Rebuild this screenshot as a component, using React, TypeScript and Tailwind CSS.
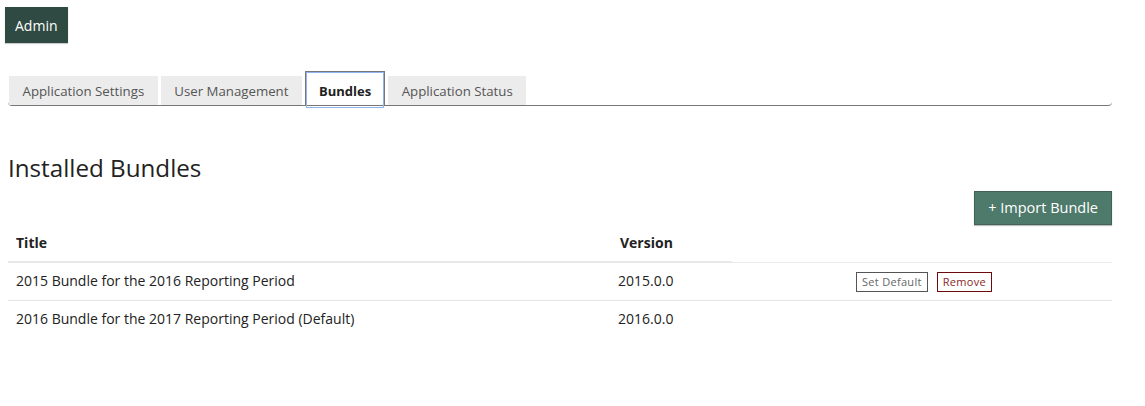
import React from "react";

const tabs = ["Application Settings", "User Management", "Bundles", "Application Status"];

export default function App() {
  return (
    <div className="w-[1145px] h-[406px] bg-white text-[#222] font-['Open_Sans',sans-serif]">
      <div className="pt-[7px] pl-[5px]">
        <button className="h-[36px] px-[10px] bg-[#2f4a42] text-white text-[14px] shadow-[0_1px_1px_rgba(0,0,0,0.2)]">
          Admin
        </button>
      </div>

      <div className="ml-[8px] w-[1104px] mt-[29px] flex items-end gap-[3px] pl-[1px] border-b border-[#777] rounded-b-[4px] h-[34px]">
        {tabs.map((t) =>
          t === "Bundles" ? (
            <div
              key={t}
              className="h-[34px] border border-b-0 border-[#777] bg-white flex"
            >
              <div className="flex-1 flex items-center px-[12px] pt-[3px] border border-[#8fb4f0] text-[13px] font-bold text-[#222] mb-[-3px]">
                {t}
              </div>
            </div>
          ) : (
            <div
              key={t}
              className="h-[29px] bg-[#ececec] flex items-center px-[13.5px] pt-[3px] text-[13.25px] text-[#555]"
            >
              {t}
            </div>
          )
        )}
      </div>

      <h1 className="ml-[8px] mt-[47px] text-[24.2px] leading-[29px] text-[#222]">Installed Bundles</h1>

      <div className="w-[1112px] flex justify-end mt-[9px]">
        <button className="h-[34px] px-[13px] bg-[#4e7a6b] text-white text-[14.5px] border border-[#3f6356] shadow-[0_1px_1px_rgba(0,0,0,0.25)]">
          + Import Bundle
        </button>
      </div>

      <table className="ml-[8px] w-[1104px] table-fixed border-collapse text-[14px] mt-[2px]">
        <colgroup>
          <col className="w-[604px]" />
          <col className="w-[120px]" />
          <col />
        </colgroup>
        <thead>
          <tr className="h-[35px]">
            <th className="text-left font-bold px-[8px] pb-[3px] border-b-2 border-[#e8e8e8]">Title</th>
            <th className="text-left font-bold px-[8px] pb-[3px] border-b-2 border-[#e8e8e8]">Version</th>
            <th className="border-b border-[#eaeaea]"></th>
          </tr>
        </thead>
        <tbody>
          <tr className="h-[38px] border-b border-[#e6e6e6]">
            <td className="px-[8px] pb-[1px]">2015 Bundle for the 2016 Reporting Period</td>
            <td className="px-[6px] pb-[1px]">2015.0.0</td>
            <td className="text-center">
              <div className="inline-flex gap-[9px] items-center pl-[4px]">
                <button className="h-[20px] px-[5px] border border-[#555] text-[11px] text-[#666] tracking-[0.3px] bg-white">
                  Set Default
                </button>
                <button className="h-[20px] px-[5px] border border-[#6b0a0a] text-[11px] text-[#8a1f1f] tracking-[0.3px] bg-white">
                  Remove
                </button>
              </div>
            </td>
          </tr>
          <tr className="h-[38px]">
            <td className="px-[8px] pb-[1px]">2016 Bundle for the 2017 Reporting Period (Default)</td>
            <td className="px-[6px] pb-[1px]">2016.0.0</td>
            <td></td>
          </tr>
        </tbody>
      </table>
    </div>
  );
}
